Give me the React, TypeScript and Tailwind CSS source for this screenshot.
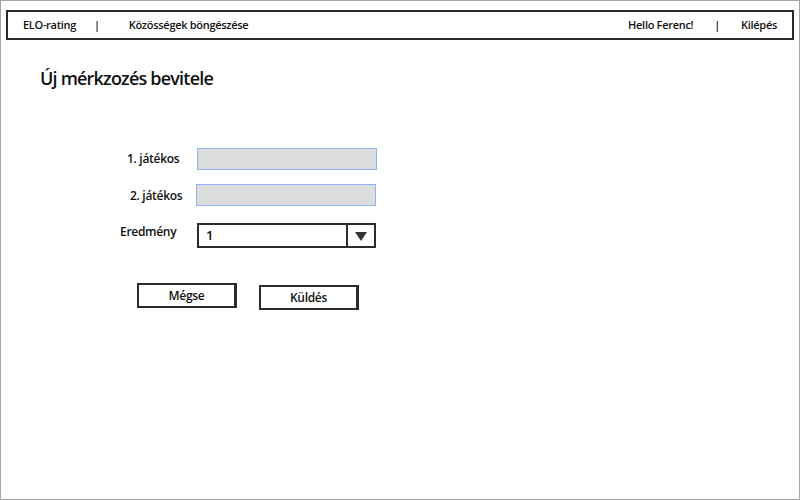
import React from "react";

export default function App() {
  return (
    <div className="w-[800px] h-[500px] bg-white border border-[#a6a6a6] text-[#111] relative overflow-hidden" style={{ fontFamily: '"Open Sans", "Noto Sans", sans-serif' }}>
      <div className="mx-[5px] mt-[9px] h-[30px] border-2 border-[#2b2b2b] flex items-center text-[11px] font-semibold tracking-[-0.3px]">
        <span className="ml-[15px]">ELO-rating</span>
        <span className="ml-[18px]">|</span>
        <span className="ml-[29px]">Közösségek böngészése</span>
        <div className="flex-1" />
        <span>Hello Ferenc!</span>
        <span className="ml-[21px]">|</span>
        <span className="ml-[21px] mr-[15px]">Kilépés</span>
      </div>
      <h1 className="ml-[39px] mt-[24px] text-[18px] font-semibold tracking-[-0.8px] leading-[28px]">Új mérkzozés bevitele</h1>
      <div className="mt-[56px] flex flex-col text-[12px] font-semibold tracking-[-0.3px]">
        <div className="flex items-center h-[22px]">
          <span className="ml-[126px] w-[70px]">1. játékos</span>
          <div className="w-[180px] h-[22px] bg-[#dcdcdc] border border-[#8fb2f0]" />
        </div>
        <div className="flex items-center h-[22px] mt-[14px]">
          <span className="ml-[129px] w-[66px] mt-[2px]">2. játékos</span>
          <div className="w-[180px] h-[22px] bg-[#dcdcdc] border border-[#8fb2f0]" />
        </div>
        <div className="flex items-start h-[25px] mt-[17px]">
          <span className="ml-[119px] w-[77px]">Eredmény</span>
          <div className="w-[179px] h-[25px] border-2 border-[#2b2b2b] flex items-center">
            <span className="flex-1 pl-[7px] text-[13px]">1</span>
            <div className="w-[28px] h-full border-l-2 border-[#2b2b2b] flex items-center justify-center">
              <svg width="12" height="10" viewBox="0 0 12 10"><polygon points="0,1 12,1 6,10" fill="#333" /></svg>
            </div>
          </div>
        </div>
        <div className="flex items-start mt-[35px]">
          <button className="ml-[136px] w-[100px] h-[25px] border-2 border-[#2b2b2b] border-r-[3px] bg-white text-[12px] font-semibold">Mégse</button>
          <button className="ml-[22px] mt-[2px] w-[100px] h-[25px] border-2 border-[#2b2b2b] border-r-[3px] bg-white text-[12px] font-semibold">Küldés</button>
        </div>
      </div>
    </div>
  );
}
